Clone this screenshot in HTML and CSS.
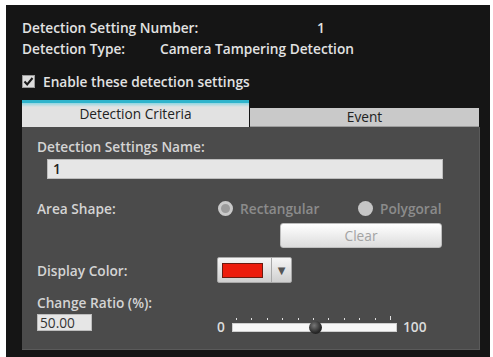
FILE: index.html
```html
<!DOCTYPE html>
<html lang="en">
<head>
  <meta charset="UTF-8" />
  <title>Detection Setting</title>
  <link rel="stylesheet" href="styles.css">
</head>
<body>

<div class="panel">
  <div class="info-row">
    <span class="info-label">Detection Setting Number:</span>
    <span class="info-num">1</span>
  </div>
  <div class="info-row">
    <span class="info-label">Detection Type:</span>
    <span>Camera Tampering Detection</span>
  </div>
  <div class="enable-row">
    <span class="check">
      <svg width="13" height="13" viewBox="0 0 13 13">
        <path d="M2.5 6.5 L5.2 9.5 L10.5 3" fill="none" stroke="#1a1a1a" stroke-width="2"/>
      </svg>
    </span>
    <span>Enable these detection settings</span>
  </div>

  <div class="tabs">
    <div class="tab active">Detection Criteria</div>
    <div class="tab">Event</div>
  </div>

  <div class="criteria">
    <div class="field-label">Detection Settings Name:</div>
    <div class="name-input">1</div>

    <div class="form-row area-row">
      <span class="row-label">Area Shape:</span>
      <span class="radio-option">
        <span class="radio checked"></span>
        <span>Rectangular</span>
      </span>
      <span class="radio-option">
        <span class="radio"></span>
        <span>Polygoral</span>
      </span>
    </div>
    <button class="clear-btn" disabled>Clear</button>

    <div class="form-row color-row">
      <span class="row-label">Display Color:</span>
      <span class="color-picker">
        <span class="swatch"></span>
        <span class="picker-arrow">&#9660;</span>
      </span>
    </div>

    <div class="field-label ratio-label">Change Ratio (%):</div>
    <div class="ratio-row">
      <span class="ratio-input">50.00</span>
      <span class="slider-min">0</span>
      <div class="slider">
        <div class="ticks">
          <i></i><i></i><i></i><i></i><i></i><i></i><i></i><i></i><i></i><i></i><i class="last"></i>
        </div>
        <div class="track">
          <span class="thumb" style="left: 50%"></span>
        </div>
      </div>
      <span class="slider-max">100</span>
    </div>
  </div>
</div>

</body>
</html>
```

FILE: styles.css
```css
* { box-sizing: border-box; }

body {
  margin: 0;
  background: #ffffff;
  font-family: "Open Sans", "DejaVu Sans", sans-serif;
  font-size: 13.7px;
  font-weight: 600;
}

.panel {
  width: 484px;
  height: 352px;
  margin: 5px 0 0 6px;
  padding: 12px 10px 0 16px;
  background: #151515;
  color: #e2e2e2;
}

.info-row {
  display: flex;
  height: 21px;
  line-height: 21px;
  white-space: nowrap;
}

.info-label {
  flex: none;
  width: 138px;
}

.info-num {
  margin-left: 157px;
}

.enable-row {
  display: flex;
  align-items: center;
  gap: 8px;
  height: 18px;
  margin-top: 13px;
}

.check {
  width: 13px;
  height: 13px;
  background: #dcdcdc;
  border: 1px solid #9a9a9a;
  display: flex;
}

.check svg {
  margin: -1px;
}

.tabs {
  display: flex;
  align-items: flex-end;
  height: 27px;
  margin-top: 10px;
  width: 458px;
}

.tab {
  color: #222;
  font-weight: 400;
  text-align: center;
}

.tab.active {
  width: 227px;
  height: 27px;
  line-height: 22px;
  border-top: 3px solid #2fb4cc;
  background: linear-gradient(#8fd6e2 0, #e2e2e2 4px, #e2e2e2 100%);
}

.tab:not(.active) {
  flex: 1;
  height: 19px;
  line-height: 18px;
  margin: 0 1px;
  background: #c9c9c9;
  border-bottom: 1px solid #9c9c9c;
}

.criteria {
  width: 458px;
  height: 223px;
  padding: 10px 0 0 15px;
  background: #4b4b4b;
  border-right: 1px solid #5a5a5a;
  border-bottom: 1px solid #5a5a5a;
  color: #d4d4d4;
}

.field-label {
  height: 20px;
  line-height: 20px;
}

.name-input {
  width: 396px;
  height: 20px;
  margin: 2px 0 0 10px;
  padding-left: 5px;
  line-height: 18px;
  background: #e6e6e6;
  border: 1px solid #bdbdbd;
  color: #222;
}

.form-row {
  display: flex;
  align-items: center;
}

.row-label {
  flex: none;
  width: 181px;
}

.area-row {
  height: 20px;
  margin-top: 19px;
}

.radio-option {
  flex: none;
  display: flex;
  align-items: center;
  gap: 7px;
  width: 140px;
  color: #8b8b8b;
}

.radio {
  width: 15px;
  height: 15px;
  border-radius: 50%;
  background: #c6c6c6;
}

.radio.checked {
  background: #9b9b9b;
  border: 3px solid #c9c9c9;
}

.clear-btn {
  display: block;
  width: 162px;
  height: 25px;
  margin: 5px 0 0 243px;
  padding: 0;
  border: 1px solid #bdbdbd;
  border-radius: 3px;
  background: linear-gradient(#ffffff, #dcdcdc);
  color: #a3a3a3;
  font-family: inherit;
  font-size: 13.7px;
  font-weight: 400;
}

.color-row {
  height: 26px;
  margin-top: 9px;
}

.color-picker {
  display: flex;
  align-items: center;
  width: 75px;
  height: 26px;
  margin-left: -1px;
  border: 1px solid #a8a8a8;
  border-radius: 2px;
  background: linear-gradient(#f6f6f6, #cfcfcf);
}

.swatch {
  width: 41px;
  height: 15px;
  margin: 0 8px 0 4px;
  background: #ec1c0c;
  border: 1px solid #6a1a10;
}

.picker-arrow {
  flex: 1;
  height: 100%;
  border-left: 1px solid #a8a8a8;
  color: #555;
  font-size: 10px;
  line-height: 24px;
  text-align: center;
}

.ratio-label {
  height: 18px;
  line-height: 18px;
  margin-top: 11px;
}

.ratio-row {
  display: flex;
  align-items: flex-end;
  height: 20px;
  margin-top: 2px;
}

.ratio-input {
  width: 55px;
  height: 17px;
  margin-bottom: 3px;
  padding-left: 2px;
  line-height: 15px;
  background: #e6e6e6;
  border: 1px solid #bdbdbd;
  color: #333;
  font-weight: 400;
}

.slider-min {
  margin-left: 125px;
  width: 15px;
  line-height: 15px;
  color: #dcdcdc;
}

.slider {
  width: 165px;
}

.ticks {
  display: flex;
  justify-content: space-between;
  align-items: flex-end;
  padding: 0 6px 0 4px;
  height: 6px;
}

.ticks i {
  width: 1px;
  height: 2px;
  background: #e0e0e0;
}

.ticks i.last {
  height: 4px;
}

.track {
  position: relative;
  height: 9px;
  margin: 3px 0 2px;
  background: #f8f8f8;
  border: 1px solid #cfcfcf;
}

.thumb {
  position: absolute;
  top: -3px;
  width: 13px;
  height: 13px;
  margin-left: -6px;
  border-radius: 50%;
  background: radial-gradient(circle at 40% 35%, #777 0, #2a2a2a 60%, #111 100%);
}

.slider-max {
  margin-left: 6px;
  line-height: 15px;
  color: #dcdcdc;
}
```
